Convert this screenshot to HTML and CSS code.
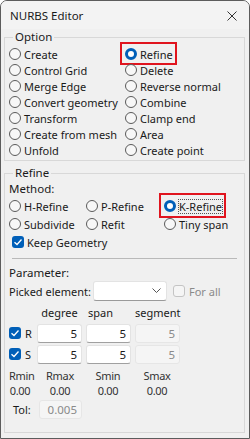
FILE: index.html
```html
<!DOCTYPE html>
<html lang="en">
<head>
  <meta charset="UTF-8">
  <title>NURBS Editor</title>
  <link rel="stylesheet" href="styles.css">
</head>
<body>

  <div class="window">
    <div class="titlebar">
      <span class="title">NURBS Editor</span>
      <svg class="close" width="10" height="10" viewBox="0 0 10 10">
        <path d="M0.5 0.5 L9.5 9.5 M9.5 0.5 L0.5 9.5" stroke="#333" stroke-width="1"/>
      </svg>
    </div>

    <!-- Option -->
    <fieldset class="group option">
      <legend>Option</legend>
      <div class="option-grid">
        <label class="radio"><input type="radio" name="op">Create</label>
        <label class="radio marked"><input type="radio" name="op" checked>Refine</label>
        <label class="radio"><input type="radio" name="op">Control Grid</label>
        <label class="radio"><input type="radio" name="op">Delete</label>
        <label class="radio"><input type="radio" name="op">Merge Edge</label>
        <label class="radio"><input type="radio" name="op">Reverse normal</label>
        <label class="radio"><input type="radio" name="op">Convert geometry</label>
        <label class="radio"><input type="radio" name="op">Combine</label>
        <label class="radio"><input type="radio" name="op">Transform</label>
        <label class="radio"><input type="radio" name="op">Clamp end</label>
        <label class="radio"><input type="radio" name="op">Create from mesh</label>
        <label class="radio"><input type="radio" name="op">Area</label>
        <label class="radio"><input type="radio" name="op">Unfold</label>
        <label class="radio"><input type="radio" name="op">Create point</label>
      </div>
    </fieldset>

    <!-- Refine -->
    <fieldset class="group refine">
      <legend>Refine</legend>
      <div class="caption">Method:</div>
      <div class="method-grid">
        <label class="radio"><input type="radio" name="method">H-Refine</label>
        <label class="radio"><input type="radio" name="method">P-Refine</label>
        <label class="radio marked"><input type="radio" name="method" checked><span class="focus">K-Refine</span></label>
        <label class="radio"><input type="radio" name="method">Subdivide</label>
        <label class="radio"><input type="radio" name="method">Refit</label>
        <label class="radio"><input type="radio" name="method">Tiny span</label>
      </div>
      <label class="check keep"><input type="checkbox" checked>Keep Geometry</label>

      <hr class="sep">

      <div class="caption param-title">Parameter:</div>
      <div class="picked">
        <span class="picked-label">Picked element:</span>
        <div class="select">
          <svg width="9" height="6" viewBox="0 0 9 6">
            <path d="M0.5 0.5 L4.5 4.5 L8.5 0.5" fill="none" stroke="#555" stroke-width="1"/>
          </svg>
        </div>
        <label class="check for-all"><input type="checkbox">For all</label>
      </div>

      <div class="param-grid">
        <span></span>
        <span class="head">degree</span>
        <span class="head head-span">span</span>
        <span class="head">segment</span>

        <label class="check axis"><input type="checkbox" checked>R</label>
        <input class="num" type="text" value="5">
        <input class="num" type="text" value="5">
        <input class="num" type="text" value="5" disabled>

        <label class="check axis"><input type="checkbox" checked>S</label>
        <input class="num" type="text" value="5">
        <input class="num" type="text" value="5">
        <input class="num" type="text" value="5" disabled>
      </div>

      <div class="range-grid">
        <span>Rmin</span><span>Rmax</span><span>Smin</span><span>Smax</span>
        <span>0.00</span><span>0.00</span><span>0.00</span><span>0.00</span>
      </div>

      <div class="tol">
        <span class="tol-label">Tol:</span>
        <input class="num tol-input" type="text" value="0.005" disabled>
      </div>
    </fieldset>
  </div>

</body>
</html>
```

FILE: styles.css
```css
body {
  margin: 0;
  font-family: "Noto Sans", "Open Sans", sans-serif;
  font-size: 11px;
  color: #1a1a1a;
  background: #ffffff;
}

.window {
  width: 250px;
  height: 439px;
  box-sizing: border-box;
  border: 1px solid #5c5c5c;
  border-radius: 7px 7px 0 0;
  background: #f0f0f0;
  overflow: hidden;
}

.titlebar {
  height: 28px;
  background: #f3f3f3;
  display: flex;
  align-items: center;
  justify-content: space-between;
  padding: 0 12px 0 9px;
}

.title {
  font-size: 11.5px;
  color: #1a1a1a;
}

.close {
  margin-top: 2px;
}

/* group boxes */
.group {
  margin: 0 4px 0 3px;
  padding: 1px 4px 2px 4px;
  border: 1px solid #d8d8d8;
  min-width: 0;
}

.group legend {
  padding: 0 2px;
  margin-left: 4px;
  line-height: 16px;
  font-size: 11.5px;
}

.refine {
  margin-top: 4px;
  height: 264px;
  padding-top: 0;
}

/* radios */
.radio {
  display: inline-flex;
  align-items: center;
  height: 16px;
  white-space: nowrap;
  position: relative;
  justify-self: start;
}

.radio input {
  appearance: none;
  width: 12px;
  height: 12px;
  margin: 0 3px 0 0;
  border: 1px solid #5a5a5a;
  border-radius: 50%;
  background: #f7f7f7;
  box-sizing: border-box;
}

.radio input:checked {
  border: 3px solid #005fb8;
  background: #ffffff;
}

.marked::after {
  content: "";
  position: absolute;
  top: -4px;
  bottom: -3px;
  left: -5px;
  right: -4px;
  border: 2px solid #e0141e;
}

.focus {
  outline: 1px dotted #555;
  outline-offset: 0;
  line-height: 13px;
}

.option-grid {
  display: grid;
  grid-template-columns: 116px auto;
  grid-auto-rows: 16px;
}

.caption {
  line-height: 16px;
  font-size: 11.5px;
}

.method-grid {
  display: grid;
  grid-template-columns: 77px 78px auto;
  grid-auto-rows: 18px;
}

.method-grid .radio {
  height: 18px;
}

/* checkboxes */
.check {
  display: inline-flex;
  align-items: center;
  white-space: nowrap;
}

.check input {
  appearance: none;
  width: 12px;
  height: 12px;
  margin: 0 3px 0 0;
  border: 1px solid #9a9a9a;
  border-radius: 3px;
  background: #f5f5f5;
  box-sizing: border-box;
}

.check input:checked {
  border: none;
  background: #005fb8 url("data:image/svg+xml,%3Csvg xmlns='http://www.w3.org/2000/svg' width='12' height='12'%3E%3Cpath d='M2.5 6.2 L5 8.5 L9.5 3.5' fill='none' stroke='white' stroke-width='1.3'/%3E%3C/svg%3E") center no-repeat;
}

.keep {
  height: 18px;
  margin-left: 3px;
}

.sep {
  border: none;
  border-top: 1px solid #b9b9b9;
  margin: 7px 3px 6px 3px;
}

.picked {
  display: flex;
  align-items: center;
  height: 20px;
}

.picked-label {
  width: 84px;
  white-space: nowrap;
}

.select {
  width: 74px;
  height: 20px;
  box-sizing: border-box;
  background: #ffffff;
  border: 1px solid #e3e3e3;
  border-bottom-color: #9a9a9a;
  border-radius: 3px;
  display: flex;
  align-items: center;
  justify-content: flex-end;
  padding-right: 5px;
}

.for-all {
  margin-left: 6px;
  color: #8a8a8a;
}

.for-all input {
  border-color: #c4c4c4;
  margin-right: 4px;
}

/* parameter table */
.param-grid {
  display: grid;
  grid-template-columns: 24px 45px 45px 45px;
  grid-template-rows: 18px 18px 18px;
  column-gap: 4px;
  row-gap: 3px;
  margin-top: 2px;
  align-items: center;
}

.head {
  text-align: center;
}

.head-span {
  text-align: left;
  padding-left: 2px;
}

.axis input {
  margin-right: 4px;
}

.num {
  width: 45px;
  height: 19px;
  box-sizing: border-box;
  border: 1px solid #e3e3e3;
  border-bottom-color: #a0a0a0;
  border-radius: 3px;
  background: #ffffff;
  text-align: right;
  padding: 0 4px;
  font-family: inherit;
  font-size: 11.5px;
  color: #1a1a1a;
}

.num:disabled {
  background: #f5f5f5;
  border-color: #e6e6e6;
  color: #8a8a8a;
}

.range-grid {
  display: grid;
  grid-template-columns: 22px 58px 38px 60px;
  grid-auto-rows: 15px;
  margin-top: 5px;
  text-align: center;
  color: #333;
  letter-spacing: -0.3px;
}

.tol {
  display: flex;
  align-items: center;
  margin-top: 2px;
}

.tol-label {
  margin-left: 4px;
  width: 26px;
}

.tol-input {
  width: 43px;
}
```
